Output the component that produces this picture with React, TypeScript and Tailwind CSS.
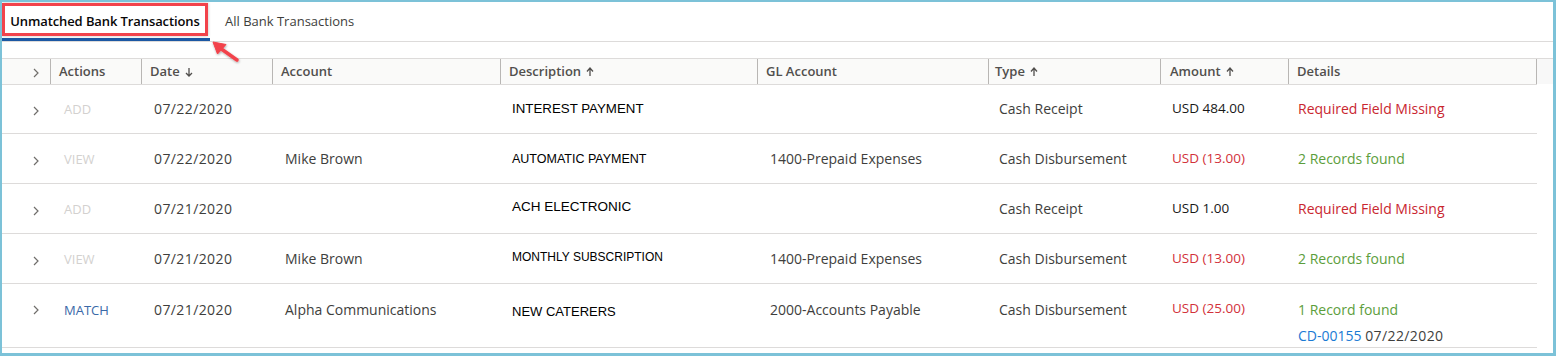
import React from "react";

const COLS = "grid-cols-[48px_91px_131px_228px_257px_231px_172px_128px_249px]";

function Chevron({ className = "" }: { className?: string }) {
  return (
    <svg width="6" height="10" viewBox="0 0 6 10" className={className}>
      <path d="M1 1 L5 5 L1 9" fill="none" stroke="#706e6b" strokeWidth="1.2" />
    </svg>
  );
}

function ArrowDown() {
  return (
    <svg width="8" height="10" viewBox="0 0 8 10" className="inline-block ml-[5px] mb-[-1px]">
      <path d="M4 1 V9 M1 6 L4 9 L7 6" fill="none" stroke="#514f4d" strokeWidth="1.3" />
    </svg>
  );
}
function ArrowUp() {
  return (
    <svg width="8" height="10" viewBox="0 0 8 10" className="inline-block ml-[5px] mb-[-1px]">
      <path d="M4 9 V1.5 M1 4.5 L4 1 L7 4.5" fill="none" stroke="#514f4d" strokeWidth="1.3" />
    </svg>
  );
}

type Row = {
  action: string;
  actionCls: string;
  date: string;
  account: string;
  desc: string;
  descCls: string;
  gl: string;
  type: string;
  amount: string;
  amountRed: boolean;
  details: string;
  detailsGreen: boolean;
  extra?: boolean;
};

const rows: Row[] = [
  {
    action: "ADD",
    actionCls: "text-[#d3d1cf]",
    date: "07/22/2020",
    account: "",
    desc: "INTEREST PAYMENT",
    descCls: "text-[13.3px] mt-[1px]",
    gl: "",
    type: "Cash Receipt",
    amount: "USD 484.00",
    amountRed: false,
    details: "Required Field Missing",
    detailsGreen: false,
  },
  {
    action: "VIEW",
    actionCls: "text-[#d3d1cf]",
    date: "07/22/2020",
    account: "Mike Brown",
    desc: "AUTOMATIC PAYMENT",
    descCls: "text-[12.5px] mt-[1px]",
    gl: "1400-Prepaid Expenses",
    type: "Cash Disbursement",
    amount: "USD (13.00)",
    amountRed: true,
    details: "2 Records found",
    detailsGreen: true,
  },
  {
    action: "ADD",
    actionCls: "text-[#d3d1cf]",
    date: "07/21/2020",
    account: "",
    desc: "ACH ELECTRONIC",
    descCls: "text-[13.5px] mt-[-3px]",
    gl: "",
    type: "Cash Receipt",
    amount: "USD 1.00",
    amountRed: false,
    details: "Required Field Missing",
    detailsGreen: false,
  },
  {
    action: "VIEW",
    actionCls: "text-[#d3d1cf]",
    date: "07/21/2020",
    account: "Mike Brown",
    desc: "MONTHLY SUBSCRIPTION",
    descCls: "text-[12px] mt-[-4px]",
    gl: "1400-Prepaid Expenses",
    type: "Cash Disbursement",
    amount: "USD (13.00)",
    amountRed: true,
    details: "2 Records found",
    detailsGreen: true,
  },
  {
    action: "MATCH",
    actionCls: "text-[#3a69a8]",
    date: "07/21/2020",
    account: "Alpha Communications",
    desc: "NEW CATERERS",
    descCls: "text-[13px] mt-[3px]",
    gl: "2000-Accounts Payable",
    type: "Cash Disbursement",
    amount: "USD (25.00)",
    amountRed: true,
    details: "1 Record found",
    detailsGreen: true,
    extra: true,
  },
];

function DataRow({ r }: { r: Row }) {
  const h = r.extra ? "h-[64px] items-start pt-[15px]" : "h-[50px] items-center";
  return (
    <div className={`grid ${COLS} w-[1535px] border-b border-[#dddbda] ${h} text-[14px] text-[#3e3e3c]`}>
      <div className={`pl-[31px] flex ${r.extra ? "pt-[6px]" : "pt-[4px]"}`}>
        <Chevron />
      </div>
      <div className={`pl-[14px] text-[13px] mt-[2px] ${r.actionCls}`}>{r.action}</div>
      <div className="pl-[13px] tracking-[0.4px]">{r.date}</div>
      <div className="pl-[13px]">{r.account}</div>
      <div className={`pl-[12px] text-black font-['Liberation_Sans',Arial,sans-serif] ${r.descCls}`}>{r.desc}</div>
      <div className="pl-[13px]">{r.gl}</div>
      <div className="pl-[11px]">{r.type}</div>
      <div className={`pl-[12px] text-[13.5px] mt-[-1px] ${r.amountRed ? "text-[#d2313a]" : "text-[#181818]"}`}>{r.amount}</div>
      <div className="pl-[10px]">
        <div className={r.detailsGreen ? "text-[#5c9e3c]" : "text-[#c9262f]"}>{r.details}</div>
        {r.extra && (
          <div className="mt-[5px]">
            <span className="text-[#1a7ad4]">CD-00155</span>{" "}
            <span className="tracking-[0.4px]">07/22/2020</span>
          </div>
        )}
      </div>
    </div>
  );
}

export default function App() {
  const hcell = "h-full flex items-center border-l border-[#b8b6b4]";
  return (
    <div className="w-[1556px] h-[356px] bg-white border-l-2 border-t-2 border-r-[3px] border-b-[3px] border-[#7cc2d8] relative font-['Open_Sans',sans-serif] overflow-hidden">
      {/* Tabs */}
      <div className="h-[40px] border-b border-[#dddbda] flex items-end">
        <div className="h-full w-[208px] flex items-center justify-center border-b-[3px] border-[#1b58a3] pt-[3px] pr-[2px]">
          <span className="text-[13px] font-semibold text-[#080707] tracking-[-0.1px]">Unmatched Bank Transactions</span>
        </div>
        <div className="h-full flex items-center pl-[15px]">
          <span className="text-[13px] text-[#3e3e3c]">All Bank Transactions</span>
        </div>
      </div>

      {/* Header */}
      <div className="mt-[16px] border-t border-[#dddbda] flex h-[26px] bg-[#fafaf9]">
        <div className={`grid ${COLS} w-[1535px] h-[26px] border-b border-[#dddbda] text-[13px] font-semibold text-[#514f4d]`}>
          <div className="h-full flex items-center pl-[31px] pt-[2px]">
            <Chevron />
          </div>
          <div className={`${hcell} pl-[8px]`}>Actions</div>
          <div className={`${hcell} pl-[8px]`}>
            Date
            <ArrowDown />
          </div>
          <div className={`${hcell} pl-[8px]`}>Account</div>
          <div className={`${hcell} pl-[8px]`}>
            Description
            <ArrowUp />
          </div>
          <div className={`${hcell} pl-[8px]`}>GL Account</div>
          <div className={`${hcell} pl-[6px]`}>
            Type
            <ArrowUp />
          </div>
          <div className={`${hcell} pl-[9px]`}>
            Amount
            <ArrowUp />
          </div>
          <div className={`${hcell} pl-[8px] border-r`}>Details</div>
        </div>
        <div className="flex-1 bg-[#f8f8f8]" />
      </div>

      {/* Rows */}
      <div>
        {rows.map((r, i) => (
          <DataRow key={i} r={r} />
        ))}
      </div>

      {/* Annotation: red box */}
      <div className="absolute left-0 top-[1px] w-[206px] h-[33px] border-[3px] border-[#f2434b] shadow-[0_0_3px_rgba(0,0,0,0.25)] pointer-events-none" />
      {/* Annotation: arrow */}
      <svg className="absolute left-[205px] top-[35px] pointer-events-none" width="40" height="30" viewBox="0 0 40 30">
        <defs>
          <filter id="sh" x="-30%" y="-30%" width="160%" height="160%">
            <feDropShadow dx="0.5" dy="1" stdDeviation="1" floodColor="#000" floodOpacity="0.35" />
          </filter>
        </defs>
        <g filter="url(#sh)">
          <path d="M30 23 L13 11" stroke="#f2434b" strokeWidth="3.5" strokeLinecap="round" />
          <path d="M6 5 L19 7.5 L10.5 17 Z" fill="#f2434b" strokeLinejoin="round" stroke="#f2434b" strokeWidth="1" />
        </g>
      </svg>
    </div>
  );
}
